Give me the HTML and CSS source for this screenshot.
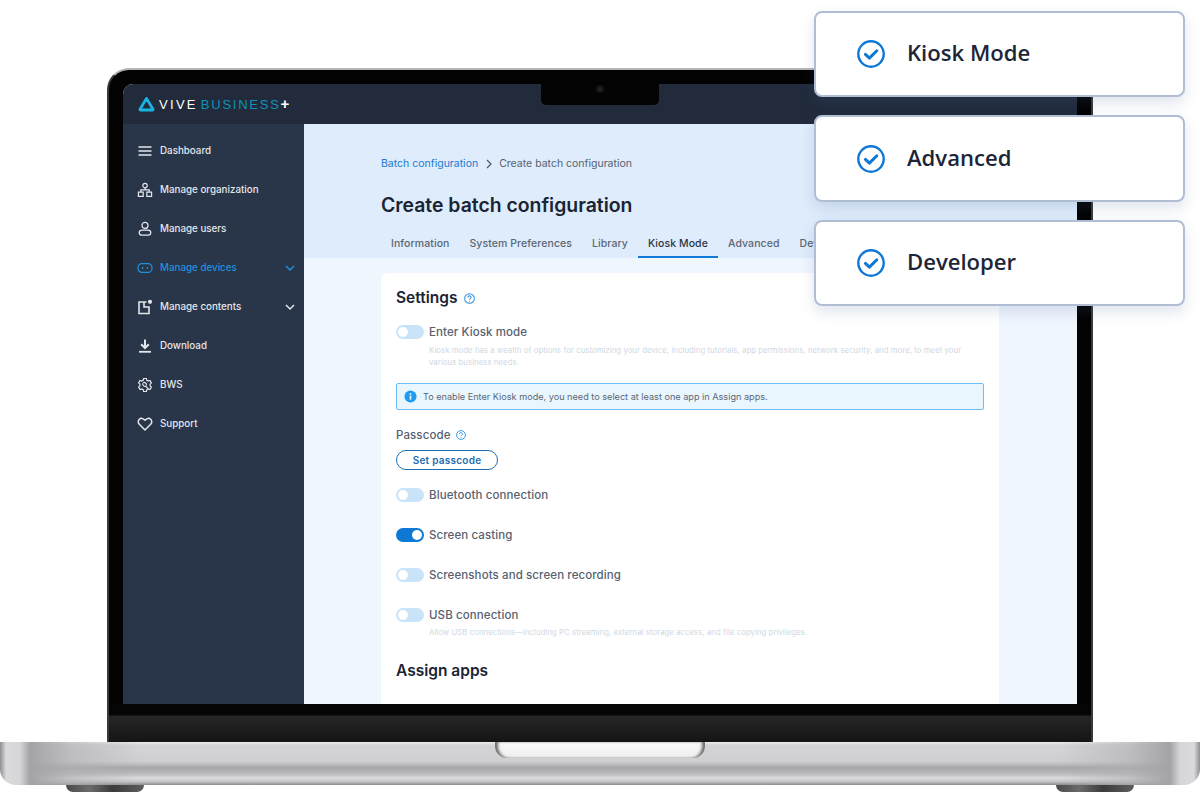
FILE: index.html
```html
<!DOCTYPE html>
<html lang="en">
<head>
    <meta charset="UTF-8">
    <title>VIVE Business+ Kiosk Mode</title>
    <link rel="stylesheet" href="styles.css">
</head>
<body>
    <div class="stage">
        <div class="lid">
            <div class="screen">
                <div class="notch"><span class="camera"></span></div>
                <header class="topbar">
                    <svg class="logo-mark" viewBox="0 0 17 16" width="17" height="16"><path d="M8.500 2.400 15 13.200a.6.6 0 0 1-.5.8H2.500a.6.6 0 0 1-.5-.8z" fill="none" stroke="#18b4e2" stroke-width="2.800" stroke-linejoin="round"/></svg>
                    <span class="logo-text">VIVE<span class="logo-business">BUSINESS</span><span class="logo-plus">+</span></span>
                </header>
                <div class="app">
                    <nav class="sidebar">
                        <a class="nav-item">
                            <svg viewBox="0 0 16 16" width="16" height="16"><path d="M1.500 4h13M1.500 8h13M1.500 12h13" stroke-width="1.600"/></svg>
                            <span>Dashboard</span>
                        </a>
                        <a class="nav-item">
                            <svg viewBox="0 0 16 16" width="16" height="16"><circle cx="8" cy="3.600" r="2.200"/><path d="M1.400 10.200h4.800v4.200H1.400zM9.800 10.200h4.800v4.200H9.800zM8 5.800v2M3.800 10.200V7.800h8.400v2.400"/></svg>
                            <span>Manage organization</span>
                        </a>
                        <a class="nav-item">
                            <svg viewBox="0 0 16 16" width="16" height="16"><circle cx="8" cy="4.400" r="3"/><path d="M5.200 9.200h5.600c1.800 0 3 1.200 3 2.600s-1 2.400-2.600 2.400H4.800c-1.600 0-2.600-1-2.600-2.400s1.200-2.600 3-2.600z"/></svg>
                            <span>Manage users</span>
                        </a>
                        <a class="nav-item nav-active">
                            <svg viewBox="0 0 16 16" width="16" height="16"><rect x="1" y="3.600" width="14" height="8.800" rx="4"/><circle class="icon-fill" cx="5.600" cy="8" r=".9"/><circle class="icon-fill" cx="10.400" cy="8" r=".9"/></svg>
                            <span>Manage devices</span>
                            <svg class="chevron" viewBox="0 0 12 12" width="12" height="12"><path d="M2 4l4 4 4-4" stroke-width="1.500"/></svg>
                        </a>
                        <a class="nav-item">
                            <svg viewBox="0 0 16 16" width="16" height="16"><path d="M9.500 3H2v11.500h10V8H7V3" stroke-width="1.600"/><circle class="icon-fill" cx="13" cy="2.800" r="2.100"/></svg>
                            <span>Manage contents</span>
                            <svg class="chevron" viewBox="0 0 12 12" width="12" height="12"><path d="M2 4l4 4 4-4" stroke-width="1.500"/></svg>
                        </a>
                        <a class="nav-item">
                            <svg viewBox="0 0 16 16" width="16" height="16"><path d="M8 1.500v8" stroke-width="2"/><path d="M4.200 6.200 8 10l3.800-3.800" stroke-width="2"/><path d="M2 13.800h12" stroke-width="1.800"/></svg>
                            <span>Download</span>
                        </a>
                        <a class="nav-item">
                            <svg viewBox="0 0 16 16" width="16" height="16"><path d="M6.600 1.500h2.800l.4 1.800 1.500.8 1.700-.6 1.400 2.400-1.300 1.300v1.600l1.300 1.300-1.400 2.400-1.700-.6-1.500.8-.4 1.800H6.600l-.4-1.800-1.500-.8-1.700.6-1.400-2.400 1.300-1.300V7.200L1.600 5.900 3 3.500l1.700.6 1.500-.8z"/><path d="M5.800 6.200a2.400 2.400 0 0 0 3 3l2.200 2.300M6.200 5.600a2.400 2.400 0 0 1 3.200 2.800"/></svg>
                            <span>BWS</span>
                        </a>
                        <a class="nav-item">
                            <svg viewBox="0 0 16 16" width="16" height="16"><path d="M8 14 2.300 8.300a3.500 3.500 0 0 1 0-5c1.500-1.400 3.800-1.300 5.700.9 1.900-2.200 4.200-2.300 5.700-.9a3.500 3.500 0 0 1 0 5z" stroke-width="1.500"/></svg>
                            <span>Support</span>
                        </a>
                    </nav>
                    <main class="main">
                        <div class="page-head">
                            <div class="breadcrumb">
                                <a class="crumb-link">Batch configuration</a>
                                <svg viewBox="0 0 8 10" width="8" height="10"><path d="M2 1l4 4-4 4" fill="none" stroke="#4b5666" stroke-width="1.200"/></svg>
                                <span>Create batch configuration</span>
                            </div>
                            <h1>Create batch configuration</h1>
                            <div class="tabs">
                                <span class="tab">Information</span>
                                <span class="tab">System Preferences</span>
                                <span class="tab">Library</span>
                                <span class="tab tab-active">Kiosk Mode</span>
                                <span class="tab">Advanced</span>
                                <span class="tab">Developer</span>
                            </div>
                        </div>
                        <section class="card">
                            <h2>Settings
                                <svg class="help" viewBox="0 0 12 12" width="11" height="11"><circle cx="6" cy="6" r="5.300"/><path d="M4.300 4.800a1.700 1.700 0 1 1 2.600 1.400c-.6.300-.9.500-.9 1.200"/><circle class="help-dot" cx="6" cy="9" r=".6"/></svg>
                            </h2>
                            <div class="setting setting-first">
                                <span class="toggle"></span>
                                <span class="setting-label">Enter Kiosk mode</span>
                            </div>
                            <p class="setting-desc">Kiosk mode has a wealth of options for customizing your device, including tutorials, app permissions, network security, and more, to meet your<br>various business needs.</p>
                            <div class="alert">
                                <svg viewBox="0 0 14 14" width="13" height="13"><circle cx="7" cy="7" r="6.500" fill="#1f9cf0"/><rect x="6.200" y="6" width="1.600" height="4.400" fill="#fff"/><rect x="6.200" y="3.400" width="1.600" height="1.600" fill="#fff"/></svg>
                                <span>To enable Enter Kiosk mode, you need to select at least one app in Assign apps.</span>
                            </div>
                            <div class="passcode-label">Passcode
                                <svg class="help" viewBox="0 0 12 12" width="10" height="10"><circle cx="6" cy="6" r="5.300"/><path d="M4.300 4.800a1.700 1.700 0 1 1 2.600 1.400c-.6.300-.9.500-.9 1.200"/><circle class="help-dot" cx="6" cy="9" r=".6"/></svg>
                            </div>
                            <button class="btn-outline">Set passcode</button>
                            <div class="setting setting-bluetooth">
                                <span class="toggle"></span>
                                <span class="setting-label">Bluetooth connection</span>
                            </div>
                            <div class="setting">
                                <span class="toggle toggle-on"></span>
                                <span class="setting-label">Screen casting</span>
                            </div>
                            <div class="setting">
                                <span class="toggle"></span>
                                <span class="setting-label">Screenshots and screen recording</span>
                            </div>
                            <div class="setting">
                                <span class="toggle"></span>
                                <span class="setting-label">USB connection</span>
                            </div>
                            <p class="setting-desc usb-desc">Allow USB connections—including PC streaming, external storage access, and file copying privileges.</p>
                            <h2 class="assign">Assign apps</h2>
                        </section>
                    </main>
                </div>
            </div>
            <div class="chin"></div>
        </div>
        <div class="base">
            <div class="thumb"></div>
        </div>
        <div class="feet">
            <span class="foot"></span>
            <span class="foot"></span>
        </div>

        <div class="features">
            <div class="feature">
                <svg viewBox="0 0 28 28" width="28" height="28"><circle cx="14" cy="14" r="12.700" fill="none" stroke="#0e78d5" stroke-width="2.400"/><path d="M8.400 14.400l4 3.700 7.400-7.300" fill="none" stroke="#0e78d5" stroke-width="3" stroke-linecap="round" stroke-linejoin="round"/></svg>
                <span>Kiosk Mode</span>
            </div>
            <div class="feature feature-tall">
                <svg viewBox="0 0 28 28" width="28" height="28"><circle cx="14" cy="14" r="12.700" fill="none" stroke="#0e78d5" stroke-width="2.400"/><path d="M8.400 14.400l4 3.700 7.400-7.300" fill="none" stroke="#0e78d5" stroke-width="3" stroke-linecap="round" stroke-linejoin="round"/></svg>
                <span>Advanced</span>
            </div>
            <div class="feature">
                <svg viewBox="0 0 28 28" width="28" height="28"><circle cx="14" cy="14" r="12.700" fill="none" stroke="#0e78d5" stroke-width="2.400"/><path d="M8.400 14.400l4 3.700 7.400-7.300" fill="none" stroke="#0e78d5" stroke-width="3" stroke-linecap="round" stroke-linejoin="round"/></svg>
                <span>Developer</span>
            </div>
        </div>
    </div>
</body>
</html>
```

FILE: styles.css
```css
* {
    box-sizing: border-box;
}

body {
    margin: 0;
    background: #fff;
    font-family: Inter, "Liberation Sans", sans-serif;
}

.stage {
    position: relative;
    width: 1200px;
    height: 792px;
    padding-top: 68px;
    overflow: hidden;
    background: #fff;
}

/* Laptop */
.lid {
    height: 674px;
    margin: 0 107px;
    padding: 16px 14px 0;
    background: #030303;
    border: 2px solid #3a3a3a;
    border-top-color: #b5b5b5;
    border-bottom: 0;
    border-radius: 22px 22px 0 0;
    display: flex;
    flex-direction: column;
}

.screen {
    position: relative;
    height: 620px;
    margin-top: -2px;
    border-radius: 10px 10px 0 0;
    overflow: hidden;
    background: #fff;
    display: flex;
    flex-direction: column;
}

.notch {
    position: absolute;
    top: 0;
    left: 418px;
    width: 118px;
    height: 21px;
    background: #040404;
    border-radius: 0 0 5px 5px;
    display: flex;
    justify-content: center;
}

.camera {
    width: 8px;
    height: 8px;
    margin-top: 1px;
    border-radius: 50%;
    background: radial-gradient(circle, #24242a 0%, #08080a 100%);
}

.chin {
    height: 38px;
    margin: 0 -14px;
    background: linear-gradient(#050505 0, #050505 11px, #262626 12px, #141414 100%);
}

.base {
    height: 43px;
    background:
        linear-gradient(90deg, #8f8f91 0, #dadadc 6px, #d6d6d8 20px, #a4a4a6 30px, rgba(176, 176, 178, .6) 70px, rgba(200, 200, 202, 0) 140px, rgba(200, 200, 202, 0) 1060px, rgba(176, 176, 178, .6) 1130px, #a4a4a6 1170px, #d6d6d8 1180px, #dadadc 1194px, #8f8f91 100%),
        linear-gradient(#eeeeee 0, #d4d4d6 3px, #cfcfd1 45%, #a6a6a8 60%, #bdbdbf 75%, #dcdcde 84%, #c4c4c6 92%, #8c8c8e 100%);
    border-radius: 0 0 16px 16px;
    display: flex;
    justify-content: center;
}

.thumb {
    width: 210px;
    height: 16px;
    background: linear-gradient(#fbfbfb, #eeeeee);
    border-radius: 0 0 12px 12px;
    box-shadow: inset 4px 0 3px -1px #6c6c6e, inset -4px 0 3px -1px #6c6c6e;
}

.feet {
    display: flex;
    justify-content: space-between;
    padding: 0 66px;
}

.foot {
    width: 78px;
    height: 7px;
    background: linear-gradient(90deg, #4a4a4a, #6b6b6b 30%, #3c3c3c 60%, #5e5e5e);
    border-radius: 0 0 22px 22px;
}

/* Top bar */
.topbar {
    height: 40px;
    flex-shrink: 0;
    padding-left: 15px;
    background: #212b3b;
    display: flex;
    align-items: center;
    gap: 4px;
}

.logo-text {
    color: #fff;
    font-family: "Liberation Sans", sans-serif;
    font-size: 13px;
    letter-spacing: 2.300px;
}

.logo-business {
    margin-left: 3px;
    color: #1190b8;
    letter-spacing: 1.750px;
}

.logo-plus {
    font-weight: bold;
    font-size: 15px;
    line-height: 13px;
    letter-spacing: 0;
}

.app {
    flex: 1;
    min-height: 0;
    display: flex;
}

/* Sidebar */
.sidebar {
    width: 181px;
    flex-shrink: 0;
    padding-top: 7px;
    background: #293548;
}

.nav-item {
    height: 39px;
    padding: 0 8px 0 14px;
    color: #e3e7ec;
    font-size: 9.800px;
    font-weight: 500;
    display: flex;
    align-items: center;
    gap: 7px;
}

.nav-item svg {
    flex-shrink: 0;
    fill: none;
    stroke: currentColor;
    stroke-width: 1.200;
}

.nav-item .icon-fill {
    fill: currentColor;
    stroke: none;
}

.nav-item .chevron {
    margin-left: auto;
}

.nav-active {
    color: #1e92de;
}

/* Main */
.main {
    flex: 1;
    min-width: 0;
    background: #f0f6fe;
}

.page-head {
    height: 134px;
    padding: 33px 0 0 77px;
    background: #deecfb;
}

.breadcrumb {
    color: #566170;
    font-size: 10.500px;
    line-height: 14px;
    display: flex;
    align-items: center;
    gap: 6.500px;
}

.crumb-link {
    color: #1b7ad0;
}

h1 {
    margin: 20px 0 0;
    color: #1b2433;
    font-size: 19.400px;
    line-height: 28px;
    font-weight: 600;
}

.tabs {
    margin-top: 8px;
    display: flex;
    white-space: nowrap;
}

.tab {
    padding: 0 10px;
    height: 31px;
    line-height: 34px;
    color: #5b6675;
    font-size: 10.500px;
    font-weight: 500;
    letter-spacing: .08px;
}

.tab-active {
    color: #2c3746;
    border-bottom: 2px solid #1179d6;
}

.card {
    width: 618px;
    height: 432px;
    margin: 15px 0 0 77px;
    padding: 15px 15px 0;
    background: #fff;
    border-radius: 6px 6px 0 0;
}

h2 {
    margin: 0;
    color: #1b2433;
    font-size: 15.500px;
    line-height: 20px;
    font-weight: 600;
}

h2 .help {
    margin-left: 3px;
    vertical-align: -1px;
}

.help {
    fill: none;
    stroke: #2d8fe0;
    stroke-width: 1.100;
}

.help .help-dot {
    fill: #2d8fe0;
    stroke: none;
}

.setting {
    height: 16px;
    margin-top: 24px;
    display: flex;
    align-items: center;
    gap: 5px;
}

.setting-first {
    margin-top: 16px;
}

.setting-bluetooth {
    margin-top: 17px;
}

.setting-label {
    color: #566170;
    font-size: 11.500px;
    font-weight: 500;
    letter-spacing: .1px;
}

.toggle {
    position: relative;
    width: 28px;
    height: 14px;
    border-radius: 7px;
    background: #c9e3f9;
}

.toggle::after {
    content: "";
    position: absolute;
    top: 2px;
    left: 2px;
    width: 10px;
    height: 10px;
    border-radius: 50%;
    background: #fff;
}

.toggle-on {
    background: #0e78d5;
}

.toggle-on::after {
    left: 16px;
}

.setting-desc {
    margin: 5px 0 0 33px;
    color: #ced7e4;
    font-size: 7.700px;
    line-height: 12px;
    letter-spacing: .09px;
}

.alert {
    height: 27px;
    width: 588px;
    margin-top: 14px;
    padding-left: 7px;
    background: #eaf6fe;
    border: 1px solid #6fbdf6;
    border-radius: 2px;
    color: #5b6675;
    font-size: 9.130px;
    display: flex;
    align-items: center;
    gap: 6px;
}

.passcode-label {
    margin-top: 18px;
    color: #566170;
    font-size: 11.500px;
    line-height: 15px;
    font-weight: 500;
    letter-spacing: .1px;
}

.passcode-label .help {
    margin-left: 2px;
    vertical-align: -1px;
}

.btn-outline {
    width: 102px;
    height: 20px;
    margin-top: 7px;
    padding: 0;
    background: #fff;
    border: 1.500px solid #1c6db4;
    border-radius: 10px;
    color: #1c6db4;
    font-family: inherit;
    font-size: 10px;
    font-weight: 600;
    letter-spacing: .25px;
}

.usb-desc {
    margin-top: 4px;
}

.assign {
    margin-top: 22px;
}

/* Floating feature labels */
.features {
    position: absolute;
    top: 11px;
    left: 814px;
    width: 371px;
    display: flex;
    flex-direction: column;
    gap: 18px;
}

.feature {
    height: 86px;
    padding-left: 41px;
    background: #fff;
    border: 2px solid #b0bdd2;
    border-radius: 8px;
    box-shadow: 0 6px 14px rgba(60, 90, 140, .16);
    color: #1d2638;
    font-family: "Open Sans", sans-serif;
    font-size: 22.100px;
    font-weight: 600;
    display: flex;
    align-items: center;
    gap: 22px;
}

.feature span {
    margin-bottom: 4px;
}

.feature-tall {
    height: 87px;
}
```
